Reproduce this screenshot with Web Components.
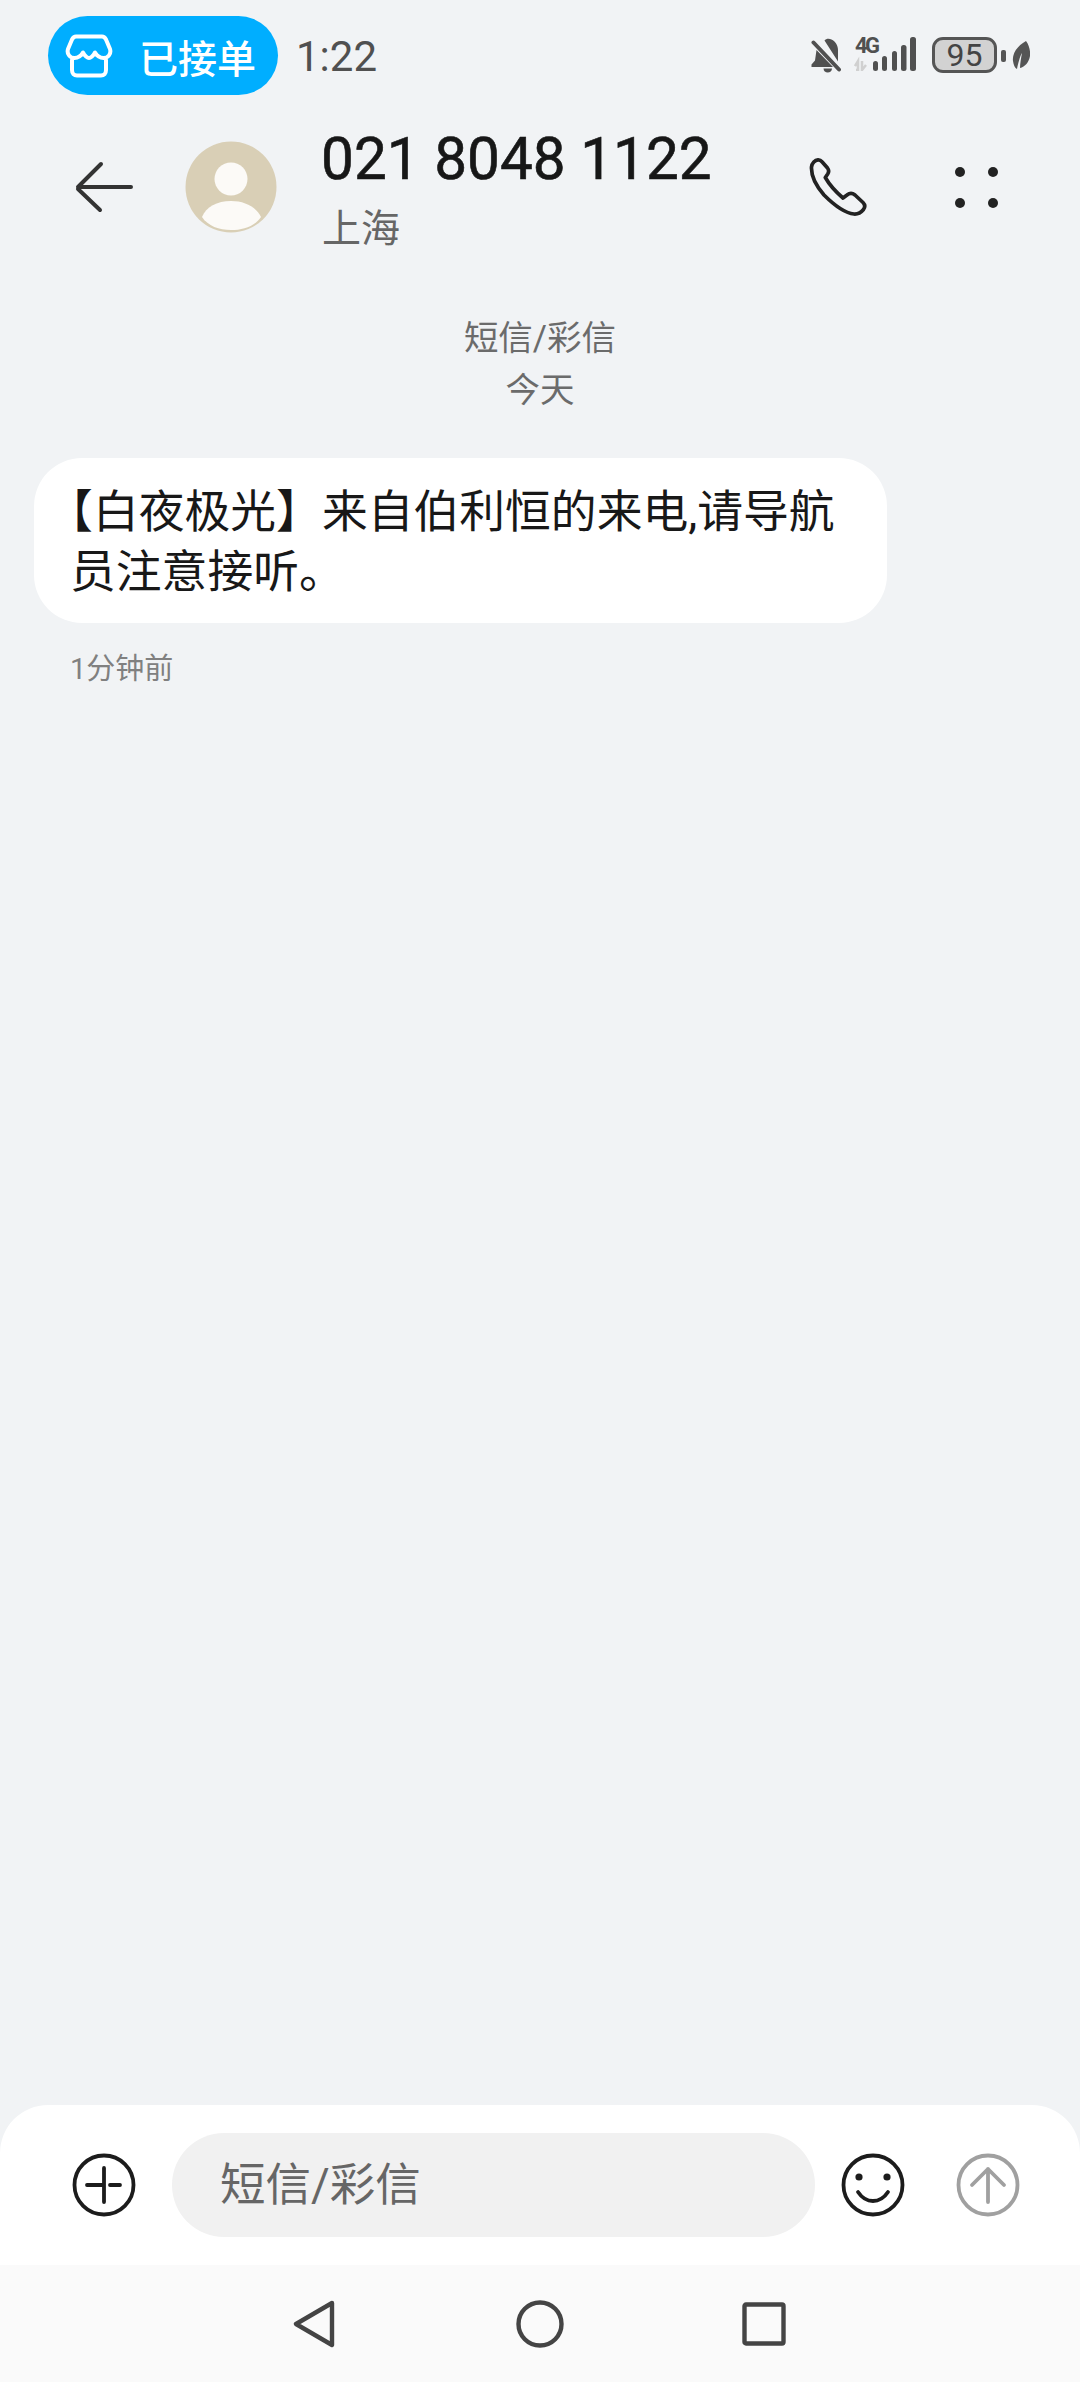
<!DOCTYPE html>
<html lang="zh-CN">
<head>
<meta charset="utf-8">
<title>短信/彩信</title>
<style>
  html, body { margin: 0; padding: 0; }
  body {
    width: 1080px;
    height: 2382px;
    overflow: hidden;
    display: flex;
    flex-direction: column;
    background: #f1f3f5;
    font-family: Roboto, "Noto Sans CJK SC", sans-serif;
  }
</style>
</head>
<body>
  <status-bar></status-bar>
  <chat-header number="021 8048 1122" place="上海"></chat-header>
  <chat-thread>
    <msg-bubble time="1分钟前">【白夜极光】来自伯利恒的来电,请导航员注意接听。</msg-bubble>
  </chat-thread>
  <chat-composer placeholder="短信/彩信"></chat-composer>
  <nav-bar></nav-bar>

<script>
// status bar at the top
class StatusBar extends HTMLElement {
    constructor() {
        super();
        this.attachShadow({ mode: 'open' });
    }

    connectedCallback() {
        this.shadowRoot.innerHTML = `
            <style>
                :host {
                    display: flex;
                    height: 95px;
                    box-sizing: border-box;
                    padding: 16px 50px 0 48px;
                    align-items: flex-start;
                    color: #505050;
                }
                .pill {
                    display: flex;
                    align-items: center;
                    width: 230px;
                    height: 79px;
                    box-sizing: border-box;
                    padding-left: 17px;
                    border-radius: 40px;
                    background: #00aeff;
                    color: #fff;
                    font-size: 39px;
                    font-weight: 500;
                }
                .pill svg { display: block; margin-right: 26px; }
                .time {
                    margin-left: 18px;
                    font-size: 42px;
                    line-height: 81px;
                    color: #505050;
                }
                .icons {
                    display: flex;
                    align-items: flex-start;
                    margin-left: auto;
                    padding-top: 21px;
                }
                svg { display: block; }
                .sig { margin: -6px 0 0 11px; }
                .batt {
                    box-sizing: border-box;
                    width: 65px;
                    height: 36px;
                    margin-left: 15px;
                    border: 3px solid #555;
                    border-radius: 11px;
                    background: #d2d2d2;
                    font-size: 32px;
                    line-height: 30px;
                    text-align: center;
                    color: #444;
                }
                .tip {
                    width: 5px;
                    height: 12px;
                    margin: 13px 0 0 4px;
                    border-radius: 2px;
                    background: #555;
                }
                .leaf { margin: 4px 0 0 6px; }
            </style>
            <div class="pill">
                <svg width="48" height="44" viewBox="0 0 48 44" fill="none" stroke="#fff" stroke-width="4" stroke-linecap="round" stroke-linejoin="round">
                    <path d="M11 2.5H37C39 2.5 40 3.5 41 5.5L45 15C46.5 20 43 24 38.5 24C34.5 24 32 22 30 18.5C28 22 26 24 24 24C22 24 20 22 18 18.5C16 22 13.5 24 9.5 24C5 24 1.5 20 3 15L7 5.5C8 3.5 9 2.5 11 2.5Z"/>
                    <path d="M7 26V36C7 39.5 9 41.5 12 41.5H36C39 41.5 41 39.5 41 36V26"/>
                </svg>
                <span>已接单</span>
            </div>
            <div class="time">1:22</div>
            <div class="icons">
                <svg width="32" height="36" viewBox="10 8 32 36" fill="#505050">
                    <path d="M23.5 11.5C25 9.5 28 9 30.5 10.5C34.5 12.5 37 16.5 37 21L37 32.5Z"/>
                    <path d="M15.5 21L32 38H10.5V35.5L14 31.5Z"/>
                    <path d="M22.5 39.5H31C31 42 29 43.5 26.7 43.5C24.5 43.5 22.5 42 22.5 39.5Z"/>
                    <path d="M12.5 13.5L38 40.5" stroke="#505050" stroke-width="4" stroke-linecap="round"/>
                </svg>
                <svg class="sig" width="63" height="40" viewBox="0 -6 63 40" fill="#505050">
                    <text x="1" y="16" font-family="Roboto, sans-serif" font-size="22" font-weight="700" textLength="25">4G</text>
                    <path d="M1 29L4 24V33H2M8 24V33L12 28" fill="none" stroke="#d0d0d0" stroke-width="2.5"/>
                    <rect x="19" y="24" width="5" height="10" rx="2.5"/>
                    <rect x="28" y="19" width="5" height="15" rx="2.5"/>
                    <rect x="38" y="14" width="5" height="20" rx="2.5"/>
                    <rect x="47" y="8" width="5.5" height="26" rx="2.5"/>
                    <rect x="56" y="0" width="6" height="34" rx="2.5"/>
                </svg>
                <div class="batt">95</div>
                <div class="tip"></div>
                <svg class="leaf" width="18" height="28" viewBox="0 0 18 28" fill="#555">
                    <path d="M14 0C5 5 0 13 1 20C1.5 24 3 27 5 28C6 23 8 15 10 12C9 17 8 23 8 27C13 26 17 21 18 15C18.5 9 17 4 14 0Z"/>
                </svg>
            </div>
        `;
    }
}

// header with the number and the actions
class ChatHeader extends HTMLElement {
    constructor() {
        super();
        this.attachShadow({ mode: 'open' });
    }

    connectedCallback() {
        const number = this.getAttribute('number') || '';
        const place = this.getAttribute('place') || '';

        this.shadowRoot.innerHTML = `
            <style>
                :host {
                    display: flex;
                    align-items: center;
                    height: 184px;
                    padding-left: 74px;
                }
                svg { display: block; flex: none; }
                .avatar { margin-left: 51px; }
                .info { margin-left: 44px; padding-top: 12px; }
                .number {
                    font-size: 58.5px;
                    font-weight: 400;
                    -webkit-text-stroke: 0.6px #171717;
                    line-height: 72px;
                    color: #171717;
                    white-space: nowrap;
                }
                .place {
                    margin-left: 1px;
                    font-size: 39px;
                    line-height: 68px;
                    color: #666;
                }
                .phone { margin-left: auto; }
                .more { margin: 0 82px 0 87px; }
            </style>
            <svg width="60" height="54" viewBox="0 0 60 54" fill="none" stroke="#333" stroke-width="4" stroke-linecap="round" stroke-linejoin="round">
                <path d="M57 27H4L27 4M4 29L26 50"/>
            </svg>
            <svg class="avatar" width="92" height="92" viewBox="0 0 92 92">
                <circle cx="46" cy="46" r="45.5" fill="#d9cfb6"/>
                <circle cx="46" cy="38" r="16.5" fill="#fcfaf7"/>
                <path d="M17 76C21 66 32 60 46 60C60 60 71 66 76 76C70 85 58 89 46 89C34 89 23 85 17 76Z" fill="#fcfaf7"/>
            </svg>
            <div class="info">
                <div class="number">${number}</div>
                <div class="place">${place}</div>
            </div>
            <svg class="phone" width="60" height="60" viewBox="8 7 60 60" fill="none" stroke="#222" stroke-width="3.7" stroke-linejoin="round">
                <path d="M11.5 17C12 13 15 10 18 9.8C20 9.7 21 10.5 22 11.7L27.5 18C29 20 29 22 27.7 24L25.3 27.5C29 34 36 42 43 48L47 45C49.5 43 52.5 43 55 45L63 52.5C65 54.5 65.3 57 63.5 59.5C61 62.5 58 64.3 54 64C44 63 31 52 24 45C17 37 11 26 11.5 17Z"/>
            </svg>
            <svg class="more" width="43" height="41" viewBox="0 0 43 41" fill="#222">
                <circle cx="5" cy="5" r="5"/>
                <circle cx="38" cy="5" r="5"/>
                <circle cx="5" cy="36" r="5"/>
                <circle cx="38" cy="36" r="5"/>
            </svg>
        `;
    }
}

// message list, grows to fill the page
class ChatThread extends HTMLElement {
    constructor() {
        super();
        this.attachShadow({ mode: 'open' });
        this.shadowRoot.innerHTML = `
            <style>
                :host {
                    display: block;
                    flex: 1;
                    padding-top: 33px;
                }
                .label {
                    font-size: 34.5px;
                    line-height: 52px;
                    text-align: center;
                    color: #6b6b6b;
                }
                .messages { margin-top: 42px; }
            </style>
            <div class="label">短信/彩信</div>
            <div class="label">今天</div>
            <div class="messages"><slot></slot></div>
        `;
    }
}

class MsgBubble extends HTMLElement {
    constructor() {
        super();
        this.attachShadow({ mode: 'open' });
    }

    connectedCallback() {
        const time = this.getAttribute('time') || '';

        this.shadowRoot.innerHTML = `
            <style>
                :host { display: block; margin-left: 34px; }
                .bubble {
                    box-sizing: border-box;
                    width: 853px;
                    padding: 25px 36px 20px;
                    border-radius: 48px;
                    background: #fff;
                    font-size: 45.8px;
                    line-height: 60px;
                    text-spacing-trim: trim-start;
                    color: #181818;
                }
                .time {
                    margin: 27px 0 0 36px;
                    font-size: 29px;
                    line-height: 38px;
                    color: #808080;
                }
            </style>
            <div class="bubble"><slot></slot></div>
            <div class="time">${time}</div>
        `;
    }
}

// input row at the bottom
class ChatComposer extends HTMLElement {
    constructor() {
        super();
        this.attachShadow({ mode: 'open' });
    }

    connectedCallback() {
        const placeholder = this.getAttribute('placeholder') || '';

        this.shadowRoot.innerHTML = `
            <style>
                :host {
                    display: flex;
                    align-items: center;
                    flex: none;
                    height: 160px;
                    box-sizing: border-box;
                    padding: 0 60px 0 72px;
                    border-radius: 48px 48px 0 0;
                    background: #fff;
                }
                svg { display: block; flex: none; }
                .field {
                    box-sizing: border-box;
                    width: 643px;
                    height: 104px;
                    margin-left: 36px;
                    padding-left: 48px;
                    border-radius: 52px;
                    background: #f1f1f1;
                    font-size: 45.5px;
                    line-height: 106px;
                    color: #666;
                }
                .smile { margin-left: 26px; }
                .send { margin-left: 51px; }
            </style>
            <svg width="64" height="64" viewBox="0 0 64 64" fill="none" stroke="#1c1c1c" stroke-width="3.8" stroke-linecap="round">
                <circle cx="32" cy="32" r="29.5"/>
                <path d="M15 32H32M32 15V49M38 32H48"/>
            </svg>
            <div class="field">${placeholder}</div>
            <svg class="smile" width="64" height="64" viewBox="0 0 64 64" fill="none" stroke="#1c1c1c" stroke-width="3.8" stroke-linecap="round">
                <circle cx="32" cy="32" r="29.5"/>
                <circle cx="18" cy="24" r="3.6" fill="#1c1c1c" stroke="none"/>
                <circle cx="46" cy="24" r="3.6" fill="#1c1c1c" stroke="none"/>
                <path d="M17 39C21 45 26 48 32 48C38 48 43 45 47 39"/>
            </svg>
            <svg class="send" width="64" height="64" viewBox="0 0 64 64" fill="none" stroke="#a0a0a0" stroke-width="3.8" stroke-linecap="round" stroke-linejoin="round">
                <circle cx="32" cy="32" r="29.5"/>
                <path d="M32 49V16M16 32L32 16L48 32"/>
            </svg>
        `;
    }
}

class NavBar extends HTMLElement {
    constructor() {
        super();
        this.attachShadow({ mode: 'open' });
        this.shadowRoot.innerHTML = `
            <style>
                :host {
                    display: flex;
                    align-items: center;
                    flex: none;
                    height: 117px;
                    padding-left: 292px;
                    background: #fafafa;
                }
                svg { display: block; flex: none; }
                .home { margin-left: 180px; }
                .recent { margin-left: 178px; }
            </style>
            <svg width="44" height="48" viewBox="0 0 44 48" fill="none" stroke="#444" stroke-width="4.4" stroke-linejoin="round">
                <path d="M40 3L4 24L40 45Z"/>
            </svg>
            <svg class="home" width="48" height="48" viewBox="0 0 48 48" fill="none" stroke="#444" stroke-width="4.4">
                <circle cx="24" cy="24" r="21.5"/>
            </svg>
            <svg class="recent" width="44" height="44" viewBox="0 0 44 44" fill="none" stroke="#444" stroke-width="4.4" stroke-linejoin="round">
                <rect x="2.5" y="2.5" width="39" height="39" rx="1.5"/>
            </svg>
        `;
    }
}

customElements.define('status-bar', StatusBar);
customElements.define('chat-header', ChatHeader);
customElements.define('chat-thread', ChatThread);
customElements.define('msg-bubble', MsgBubble);
customElements.define('chat-composer', ChatComposer);
customElements.define('nav-bar', NavBar);
</script>
</body>
</html>
